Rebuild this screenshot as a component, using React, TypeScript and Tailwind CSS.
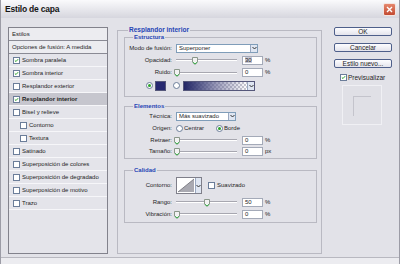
import React from "react"

const FONT = "font-['Liberation_Sans',Arial,sans-serif]"

function Check({ checked }: { checked?: boolean }) {
  return (
    <span className="w-[7px] h-[7px] shrink-0 border border-[#6b7d99] bg-white flex items-center justify-center">
      {checked && (
        <svg width="7" height="7" viewBox="0 0 7 7">
          <path d="M1.2 3.4 L2.8 5 L5.8 1.6" fill="none" stroke="#22a022" strokeWidth="1.3" />
        </svg>
      )}
    </span>
  )
}

function Radio({ checked }: { checked?: boolean }) {
  return (
    <span className="w-[7px] h-[7px] shrink-0 rounded-full border border-[#6b7d99] bg-white flex items-center justify-center">
      {checked && <span className="w-[3px] h-[3px] rounded-full bg-[#2aa12a]" />}
    </span>
  )
}

function Arrow() {
  return (
    <span className="w-[7px] self-stretch bg-[#dfe6f2] border-l border-[#9aa8c0] flex items-center justify-center">
      <svg width="5" height="4" viewBox="0 0 5 4">
        <path d="M0.5 1 L2.5 3 L4.5 1" fill="none" stroke="#333" strokeWidth="1" />
      </svg>
    </span>
  )
}

function Select({ value, width }: { value: string; width: string }) {
  return (
    <div className={`${width} h-[9px] bg-white border border-[#7f9db9] flex items-stretch`}>
      <span className="flex-1 pl-[2px] leading-[7px]">{value}</span>
      <Arrow />
    </div>
  )
}

function Slider({ value, unit = "%" }: { value: number; unit?: string }) {
  return (
    <div className="flex items-center">
      <div className="relative w-[61px] h-[9px] flex items-center">
        <div className="w-full h-[2px] border-t border-[#a7a7b0] border-b border-b-white" />
        <svg
          className="absolute top-[1px]"
          style={{ left: `${(value / 100) * 60 - 2}px` }}
          width="6"
          height="8"
          viewBox="0 0 6 8"
        >
          <path d="M0.5 0.5 H5.5 V5 L3 7.5 L0.5 5 Z" fill="#f2f2f2" stroke="#8a978a" />
          <path d="M1 5.3 L3 7 L5 5.3" fill="none" stroke="#3bb04a" strokeWidth="1" />
        </svg>
      </div>
      <div className="ml-[5px] w-[21px] h-[9px] bg-white border border-[#a4aab8] pl-[2px] leading-[7px]">
        {value === 30 ? <span className="bg-[#c9c9d6]">30</span> : value}
      </div>
      <span className="ml-[2px]">{unit}</span>
    </div>
  )
}

function Row({ label, h, children }: { label: string; h: string; children: React.ReactNode }) {
  return (
    <div className={`${h} flex items-center`}>
      <span className="w-[48px] text-right pr-[1px]">{label}</span>
      <div className="ml-[3px] flex items-center">{children}</div>
    </div>
  )
}

function Group({ title, className, children }: { title: string; className: string; children: React.ReactNode }) {
  return (
    <div className={`relative border border-[#b9b9c2] ${className}`}>
      <span className="absolute -top-[5px] left-[8px] px-[1px] bg-[#e2e2e8] font-bold text-[#2645b5] leading-[8px]">
        {title}
      </span>
      {children}
    </div>
  )
}

const styles = [
  { name: "Sombra paralela", checked: true },
  { name: "Sombra interior", checked: true },
  { name: "Resplandor exterior" },
  { name: "Resplandor interior", checked: true, selected: true },
  { name: "Bisel y relieve" },
  { name: "Contorno", indent: true },
  { name: "Textura", indent: true },
  { name: "Satinado" },
  { name: "Superposición de colores" },
  { name: "Superposición de degradado" },
  { name: "Superposición de motivo" },
  { name: "Trazo" },
]

export default function App() {
  return (
    <div className={`w-[400px] h-[264px] overflow-hidden bg-[#e2e2e8] text-[6px] text-[#1e1e1e] flex flex-col border-x border-[#9c9ca6] ${FONT}`}>
      <div className="h-[18px] shrink-0 bg-gradient-to-b from-[#fafafc] to-[#d6d6de] flex items-center justify-between pl-[4px] pr-[3px]">
        <span className="text-[8.5px] font-bold text-[#151515] tracking-[-0.2px]">Estilo de capa</span>
        <span className="w-[13px] h-[13px] rounded-[2px] border border-[#f4e4e0] bg-gradient-to-b from-[#e5866c] to-[#c24a32] flex items-center justify-center">
          <svg width="7" height="7" viewBox="0 0 7 7">
            <path d="M1 1 L6 6 M6 1 L1 6" stroke="#fff" strokeWidth="1.4" />
          </svg>
        </span>
      </div>

      <div className="flex flex-1 pl-[7px] pt-[9px]">
        <div className="w-[100px] h-[227px] border border-[#82828c] bg-[#e4e4ea] flex flex-col">
          <div className="h-[13px] flex items-center pl-[3px] bg-[#ececf0] border-b border-[#8a8a94]">Estilos</div>
          <div className="h-[13px] flex items-center pl-[3px] bg-[#ececf0] border-b border-[#8a8a94]">
            Opciones de fusión: A medida
          </div>
          {styles.map((s) => (
            <div
              key={s.name}
              className={`h-[13px] flex items-center gap-[1px] border-b border-[#f6f6f9] ${s.indent ? "pl-[11px]" : "pl-[4px]"} ${s.selected ? "bg-[#c6c6ce] font-bold" : ""}`}
            >
              <Check checked={s.checked} />
              <span className="ml-[1px]">{s.name}</span>
            </div>
          ))}
        </div>

        <div className="ml-[9px] mt-[3px] w-[205px] h-[224px] border border-[#b9b9c2] relative pl-[6px] pr-[4px] pt-[6px] flex flex-col">
          <span className="absolute -top-[5px] left-[10px] px-[1px] bg-[#e2e2e8] font-bold text-[#2645b5] leading-[8px] text-[6.5px]">
            Resplandor interior
          </span>

          <Group title="Estructura" className="h-[60px] pt-[4px]">
            <Row label="Modo de fusión:" h="h-[12px]">
              <Select value="Superponer" width="w-[82px]" />
            </Row>
            <Row label="Opacidad:" h="h-[12px]">
              <Slider value={30} />
            </Row>
            <Row label="Ruido:" h="h-[13px]">
              <Slider value={0} />
            </Row>
            <div className="h-[13px] flex items-center pl-[21px]">
              <Radio checked />
              <span className="ml-[2px] w-[11px] h-[10px] bg-[#262870] border border-[#55577a]" />
              <span className="ml-[7px]"><Radio /></span>
              <div className="ml-[3px] w-[72px] h-[10px] border border-[#55577a] flex items-stretch bg-[repeating-conic-gradient(#c8c8d0_0_25%,#ffffff_0_50%)] bg-[length:4px_4px]">
                <div className="flex-1 bg-gradient-to-r from-[#232565] via-[#6a6b98]/70 to-transparent" />
                <Arrow />
              </div>
            </div>
          </Group>

          <Group title="Elementos" className="mt-[9px] h-[53px] pt-[3px]">
            <Row label="Técnica:" h="h-[12px]">
              <Select value="Más suavizado" width="w-[60px]" />
            </Row>
            <Row label="Origen:" h="h-[12px]">
              <Radio />
              <span className="ml-[1px] w-[32px]">Centrar</span>
              <Radio checked />
              <span className="ml-[1px]">Borde</span>
            </Row>
            <Row label="Retraer:" h="h-[12px]">
              <Slider value={0} />
            </Row>
            <Row label="Tamaño:" h="h-[11px]">
              <Slider value={0} unit="px" />
            </Row>
          </Group>

          <Group title="Calidad" className="mt-[11px] h-[53px] pt-[6px]">
            <Row label="Contorno:" h="h-[17px]">
              <div className="w-[26px] h-[17px] border border-[#7f7f8a] bg-white flex items-stretch">
                <svg width="18" height="15" viewBox="0 0 18 15" className="shrink-0">
                  <path d="M1 14 L17 1 L17 14 Z" fill="#a9a9b1" />
                  <path d="M1 14 L17 1" stroke="#6c6c74" strokeWidth="0.8" />
                </svg>
                <Arrow />
              </div>
              <span className="ml-[6px]"><Check /></span>
              <span className="ml-[2px]">Suavizado</span>
            </Row>
            <Row label="Rango:" h="h-[12px] mt-[2px]">
              <Slider value={50} />
            </Row>
            <Row label="Vibración:" h="h-[12px]">
              <Slider value={0} />
            </Row>
          </Group>
        </div>

        <div className="ml-[12px] w-[58px] flex flex-col">
          {["OK", "Cancelar", "Estilo nuevo..."].map((b) => (
            <div
              key={b}
              className="h-[9px] mb-[7px] rounded-[2px] border border-[#4e5f8a] bg-gradient-to-b from-[#fdfdff] to-[#e4e4ec] flex items-center justify-center text-[6.5px]"
            >
              {b}
            </div>
          ))}
          <div className="flex items-center pl-[6px] -mt-[2px] h-[9px]">
            <Check checked />
            <span className="ml-[1px] text-[6.5px]">Previsualizar</span>
          </div>
          <div className="ml-[8px] mt-[3px] w-[40px] h-[40px] border border-[#f0f0f4] bg-[#e0e0e6] pl-[10px] pt-[10px]">
            <div className="w-[18px] h-[20px] border-l border-t border-[#c4c4cc]" />
          </div>
        </div>
      </div>
      <div className="h-[7px] shrink-0 border-t border-[#b8b8c0] bg-[#ececf0]" />
    </div>
  )
}
